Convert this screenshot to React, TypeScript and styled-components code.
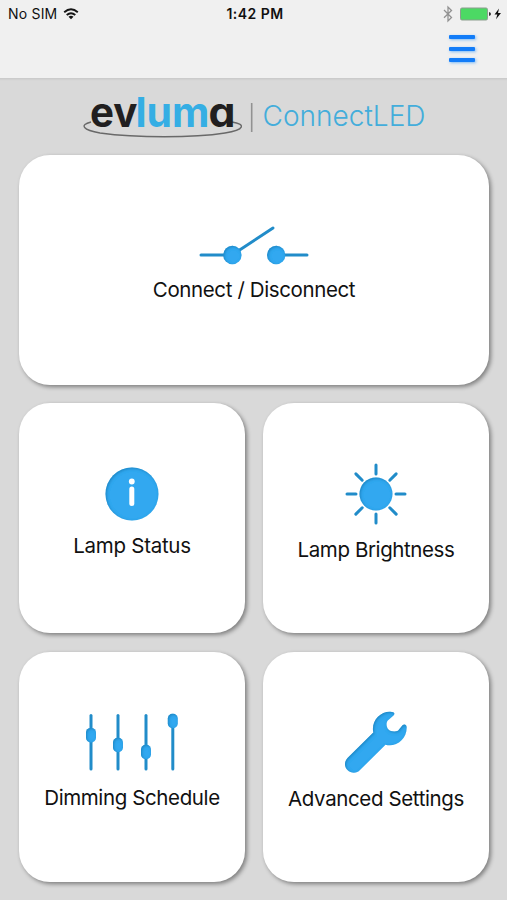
import React from 'react';
import styled, { createGlobalStyle } from 'styled-components';

const GlobalStyle = createGlobalStyle`
  * { box-sizing: border-box; }
  body { margin: 0; background: #d9d9d9; font-family: Inter, "Liberation Sans", sans-serif; }
  svg { display: block; }
`;

const Screen = styled.div`
  width: 507px;
  height: 900px;
  display: flex;
  flex-direction: column;
  overflow: hidden;
  background: #d9d9d9;
  color: #111;
`;

const Header = styled.header`
  height: 79px;
  flex: none;
  background: #f0f0f0;
  border-bottom: 1px solid #cbcbcb;
  box-shadow: 0 1px 1px #d1d1d1;
`;

const StatusBar = styled.div`
  height: 27px;
  display: grid;
  grid-template-columns: 1fr auto 1fr;
  align-items: center;
  padding: 0 5px 0 8px;
  font-size: 14px;
`;

const Carrier = styled.div`
  display: flex;
  align-items: center;
  gap: 6px;
  letter-spacing: 0.2px;
`;

const Clock = styled.div`
  font-weight: 600;
  letter-spacing: 0.45px;
`;

const Indicators = styled.div`
  display: flex;
  justify-content: flex-end;
`;

const NavBar = styled.nav`
  display: flex;
  justify-content: flex-end;
  padding: 8px 32px 0 0;
`;

const MenuButton = styled.button`
  display: flex;
  flex-direction: column;
  gap: 7.5px;
  width: 26px;
  padding: 0;
  border: 0;
  background: none;
`;

const MenuLine = styled.span`
  height: 4px;
  border-radius: 1px;
  background: #127cf8;
  box-shadow: 1px 1px 3px rgba(30, 144, 255, 0.55);
`;

const Brand = styled.div`
  height: 75px;
  flex: none;
`;

const Grid = styled.main`
  display: grid;
  grid-template-columns: 226px 226px;
  grid-template-rows: repeat(3, 230px);
  gap: 18.5px 18px;
  padding-left: 19px;
  padding-top: 0.5px;
`;

const Card = styled.section<{ $wide?: boolean; $top: number }>`
  grid-column: ${p => (p.$wide ? '1 / -1' : 'auto')};
  display: flex;
  flex-direction: column;
  align-items: center;
  padding-top: ${p => p.$top}px;
  border-radius: 31px;
  background: #fff;
  box-shadow: 2px 2px 4px rgba(0, 0, 0, 0.42);
`;

const Label = styled.div<{ $gap: number; $spacing: number }>`
  margin-top: ${p => p.$gap}px;
  font-size: 20.5px;
  line-height: 26px;
  letter-spacing: ${p => p.$spacing}px;
  white-space: nowrap;
`;

const BLUE = '#31a8f0';
const EDGE = '#218cc9';

const Defs = () => (
  <svg width="0" height="0" aria-hidden="true">
    <defs>
      <filter id="inset" x="-10%" y="-10%" width="120%" height="120%">
        <feOffset in="SourceAlpha" dx="1.2" dy="0.8" result="shifted" />
        <feGaussianBlur in="shifted" stdDeviation="1.5" result="soft" />
        <feComposite in="SourceAlpha" in2="soft" operator="out" result="rim" />
        <feFlood floodColor="#0d659c" floodOpacity="0.65" />
        <feComposite in2="rim" operator="in" result="shade" />
        <feMerge>
          <feMergeNode in="SourceGraphic" />
          <feMergeNode in="shade" />
        </feMerge>
      </filter>
    </defs>
  </svg>
);

const Wifi = () => (
  <svg width="16" height="12" viewBox="0 0 16 12" fill="none" stroke="#151515" strokeWidth="1.9">
    <path d="M1.2 4.3Q8-1.6 14.8 4.3M3.7 7Q8 3.3 12.3 7" />
    <path d="M8 11.2 5.5 8.8Q8 6.8 10.5 8.8Z" fill="#151515" stroke="none" />
  </svg>
);

const PowerIcons = () => (
  <svg width="60" height="18" viewBox="442 4.5 60 18">
    <path d="M444 9.5 451.5 17 448 20.5V6.5L451.5 10 444 17.2" fill="none" stroke="#929292" strokeWidth="1.3" />
    <rect x="460.5" y="7.5" width="27" height="12" rx="1.5" fill="#4cd964" stroke="#8b9d8e" />
    <path d="M489 11.5Q491 12 491 13.5T489 15.5Z" fill="#333" />
    <path d="M499 8 494.5 14H497.3L496 18.8 501 12.5H498Z" fill="#111" />
  </svg>
);

const SingleStory = styled.text`
  font-feature-settings: "cv11" 1;
`;

const Logo = () => (
  <svg width="507" height="75" viewBox="0 79 507 75">
    <path d="M91 122C79 125 83 130 100 133C137 138 193 138 225 133C245 130 246 124 232 122" fill="none" stroke="#696969" strokeWidth="1.3" />
    <g fontFamily="Inter" fontSize="41" fontWeight="700">
      <text x="90" y="126.5" textLength="47.5" lengthAdjust="spacingAndGlyphs" fill="#211f20">ev</text>
      <text x="135.5" y="126.5" textLength="74" lengthAdjust="spacingAndGlyphs" fill="#35aee4">lum</text>
      <SingleStory x="208.5" y="126.5" textLength="27" lengthAdjust="spacingAndGlyphs" fill="#211f20">a</SingleStory>
    </g>
    <path d="M251.7 103V132" stroke="#929292" strokeWidth="1.6" />
    <text x="262.5" y="126" fontFamily="Inter" fontSize="28.5" fontWeight="300" textLength="163" lengthAdjust="spacingAndGlyphs" fill="#43addb">ConnectLED</text>
  </svg>
);

const SwitchIcon = () => (
  <svg width="110" height="42" viewBox="199 225 110 42">
    <path d="M201 255H232M276 255H307M232 255 273 228" stroke={EDGE} strokeWidth="3" strokeLinecap="round" />
    <g fill={BLUE} filter="url(#inset)">
      <circle cx="232.4" cy="255" r="9.2" />
      <circle cx="276.2" cy="255" r="9.2" />
    </g>
  </svg>
);

const InfoIcon = () => (
  <svg width="54" height="54" viewBox="105 467 54 54">
    <circle cx="132" cy="494" r="26.5" fill={BLUE} filter="url(#inset)" />
    <circle cx="131.8" cy="481.5" r="2.9" fill="#fff" />
    <path d="M131.8 489V503.5" stroke="#fff" strokeWidth="5" strokeLinecap="round" />
  </svg>
);

const SunIcon = () => (
  <svg width="62" height="62" viewBox="-31 -31 62 62">
    <circle r="16.5" fill={BLUE} filter="url(#inset)" />
    <g stroke={EDGE} strokeWidth="3" strokeLinecap="round">
      {[0, 90, 180, 270].map(a => <path key={a} d="M0-20V-29" transform={`rotate(${a})`} />)}
      {[45, 135, 225, 315].map(a => <path key={a} d="M0-19.5V-28.5" transform={`rotate(${a})`} />)}
    </g>
  </svg>
);

const SlidersIcon = () => (
  <svg width="94" height="58" viewBox="85 713 94 58">
    {[[91, 735.2], [118, 745], [146, 752], [172.8, 721]].map(([x, y]) => (
      <g key={x}>
        <path d={`M${x} 715.5V769`} stroke={EDGE} strokeWidth="3" strokeLinecap="round" />
        <rect x={x - 5} y={y - 7.2} width="10" height="14.4" rx="4.6" fill={BLUE} filter="url(#inset)" />
      </g>
    ))}
  </svg>
);

const WrenchIcon = () => (
  <svg width="64" height="64" viewBox="344 710 64 64">
    <path
      d="M390 711.8C394.5 711.8 395.3 713.8 393.5 715.5L387.8 720.5C386 722.5 386.3 726.5 388 729C390.5 731.8 395 732 398 730.8L402.5 725.3C404.5 723.5 406.7 725 406.7 727.5C406.7 739.5 396 747.5 385.5 744.8L360 770C357 773.5 351 773.5 347.5 770C344 766.5 344.3 761.5 347.5 758L373.3 732.5C371 721.5 379.5 711.8 390 711.8Z"
      fill={BLUE}
      filter="url(#inset)"
    />
  </svg>
);

export default function App() {
  return (
    <Screen>
      <GlobalStyle />
      <Header>
        <StatusBar>
          <Carrier>No SIM <Wifi /></Carrier>
          <Clock>1:42 PM</Clock>
          <Indicators><PowerIcons /></Indicators>
        </StatusBar>
        <NavBar>
          <MenuButton aria-label="Menu"><MenuLine /><MenuLine /><MenuLine /></MenuButton>
        </NavBar>
      </Header>
      <Brand><Logo /></Brand>
      <Grid>
        <Card $wide $top={70.5}><SwitchIcon /><Label $gap={10} $spacing={-0.38}>Connect / Disconnect</Label></Card>
        <Card $top={64}><InfoIcon /><Label $gap={12} $spacing={-0.28}>Lamp Status</Label></Card>
        <Card $top={60}><SunIcon /><Label $gap={12} $spacing={-0.4}>Lamp Brightness</Label></Card>
        <Card $top={61.5}><SlidersIcon /><Label $gap={13.5} $spacing={-0.38}>Dimming Schedule</Label></Card>
        <Card $top={58.5}><WrenchIcon /><Label $gap={11.5} $spacing={-0.38}>Advanced Settings</Label></Card>
      </Grid>
      <Defs />
    </Screen>
  );
}
